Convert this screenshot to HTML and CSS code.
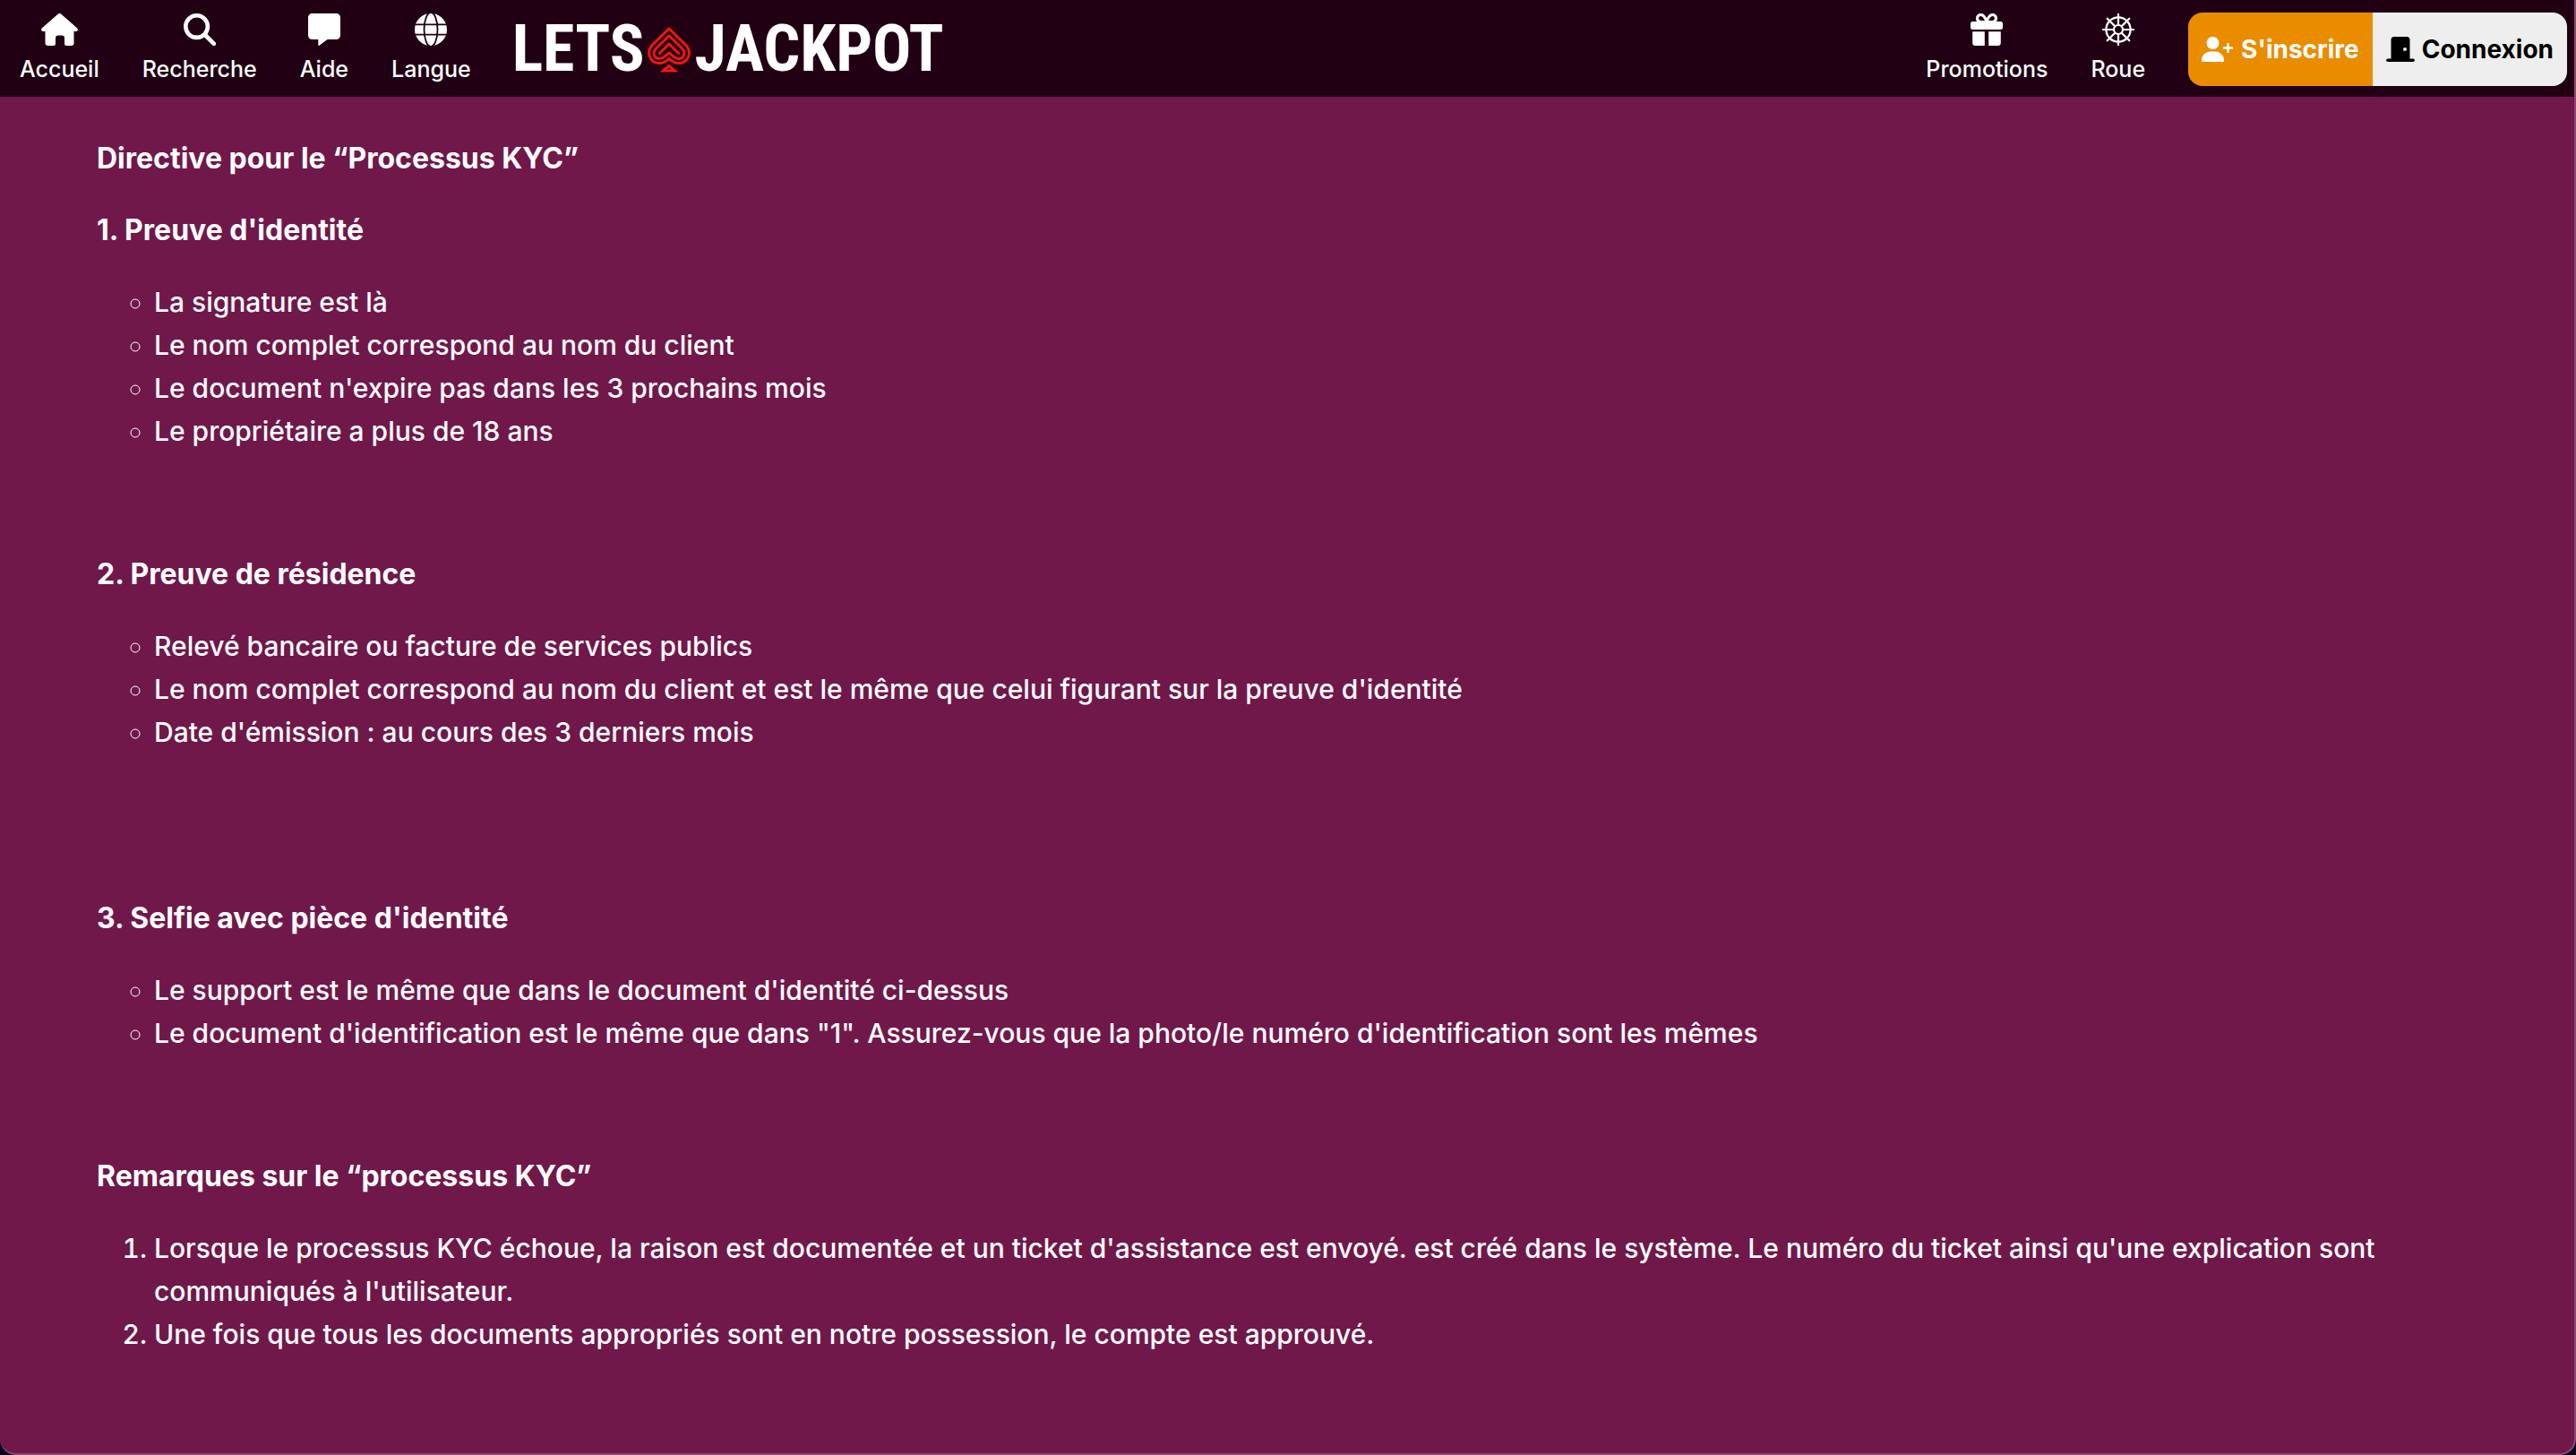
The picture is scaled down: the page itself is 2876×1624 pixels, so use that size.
FILE: index.html
```html
<!DOCTYPE html>
<html lang="fr">
<head>
<meta charset="utf-8">
<meta name="viewport" content="width=device-width, initial-scale=1">
<title>Lets Jackpot – Processus KYC</title>
<link rel="stylesheet" href="styles.css">
</head>
<body>
<div class="page">
  <header class="topbar">
    <nav class="menu" aria-label="Navigation principale">
      <a class="menu-link" href="#accueil">
        <svg class="icon icon-wide" viewBox="0 0 41 36" aria-hidden="true"><path d="M18.700.8a2.500 2.500 0 0 1 3.600 0L40.300 16.600c1.200 1.200.5 3.500-1.400 3.500H36.500V33a3 3 0 0 1-3 3H28a2 2 0 0 1-2-2v-6.500a3 3 0 0 0-3-3h-4a3 3 0 0 0-3 3V34a2 2 0 0 1-2 2H7.500a3 3 0 0 1-3-3V20.100H2.100C.2 20.100-.5 17.800.7 16.600z"/></svg>
        <span>Accueil</span>
      </a>
      <a class="menu-link" href="#recherche">
        <svg class="icon" viewBox="0 0 36 36" aria-hidden="true"><circle class="line thick" cx="14.600" cy="14.600" r="12.300"/><path class="line thick round" d="M23.500 23.500 33.800 33.800"/></svg>
        <span>Recherche</span>
      </a>
      <a class="menu-link" href="#aide">
        <svg class="icon" viewBox="0 0 36 36" aria-hidden="true"><path d="M4.500 0h27A4.500 4.500 0 0 1 36 4.500v20a4.500 4.500 0 0 1-4.500 4.500H21.500L12.500 35.800c-.6.4-1.200.1-1.200-.6V29H4.500A4.500 4.500 0 0 1 0 24.500v-20A4.500 4.500 0 0 1 4.500 0z"/></svg>
        <span>Aide</span>
      </a>
      <a class="menu-link" href="#langue">
        <svg class="icon" viewBox="0 0 36 36" aria-hidden="true"><circle cx="18" cy="18" r="18"/><g class="line cut"><path d="M0 12.400h36M0 23.600h36"/><ellipse cx="18" cy="18" rx="7.500" ry="19"/></g></svg>
        <span>Langue</span>
      </a>
    </nav>

    <a class="logo" href="#top" aria-label="Lets Jackpot">
      <span>LETS</span>
      <svg class="spade" viewBox="0 0 48 52" aria-hidden="true">
        <path d="M24 3 5.500 21C-2.500 29.500 3 41.500 13 41.500c4.500 0 8-1.800 11-5 3 3.200 6.500 5 11 5 10 0 15.500-12 7.500-20.500z"/>
        <path d="M24 11 9.500 25c-5 5.500-1.500 11.500 4 11.500 3.500 0 6-2.500 10.500-6.500 4.500 4 7 6.500 10.500 6.500 5.500 0 9-6 4-11.500z"/>
        <path d="m12.500 31.500L24 20l11.500 11.500"/>
        <path d="M24 44.500 17.500 50h13z"/>
      </svg>
      <span>JACKPOT</span>
    </a>

    <nav class="menu menu-extra" aria-label="Offres">
      <a class="menu-link" href="#promotions">
        <svg class="icon" viewBox="0 0 36 36" aria-hidden="true"><path class="line medium" d="M17.500 9.500H11.500A4 4 0 0 1 11.500 1.500C15 1.500 16.500 5 18 9c1.500-4 3-7.500 6.500-7.500a4 4 0 0 1 0 8H18"/><path d="M2.500 9h31A2.500 2.500 0 0 1 36 11.500V15.500A2.500 2.500 0 0 1 33.500 18H2.500A2.500 2.500 0 0 1 0 15.500V11.500A2.500 2.500 0 0 1 2.500 9zM2.200 20.200H15.800V36H5.500a3.300 3.300 0 0 1-3.300-3.300zM20.200 20.200H33.800V32.700A3.300 3.300 0 0 1 30.500 36H20.200z"/></svg>
        <span>Promotions</span>
      </a>
      <a class="menu-link" href="#roue">
        <svg class="icon" viewBox="0 0 36 36" aria-hidden="true"><g class="line thin round"><circle cx="18" cy="18" r="13.600"/><circle cx="18" cy="18" r="5"/><path d="M18 1v12M18 23v12M1 18h12M23 18h12M5.700 5.700l8.700 8.700M21.600 21.600l8.700 8.700M30.300 5.700l-8.700 8.700M14.400 21.600l-8.700 8.700"/></g></svg>
        <span>Roue</span>
      </a>
    </nav>

    <div class="account">
      <button class="account-btn signup" type="button">
        <svg class="btn-icon-wide" viewBox="0 0 36 28" aria-hidden="true"><circle cx="12.500" cy="7" r="7"/><path d="M0 26.400C0 21 4.400 16.600 9.800 16.600h5.400c5.400 0 9.800 4.400 9.800 9.800 0 .9-.7 1.600-1.600 1.600H1.600C.7 28 0 27.300 0 26.400z"/><path class="line plus" d="M29.500 7v11M24 12.500h11"/></svg>
        <span>S'inscrire</span>
      </button>
      <button class="account-btn login" type="button">
        <svg class="btn-icon" viewBox="0 0 32 28" aria-hidden="true"><path fill-rule="evenodd" d="M5.500 3.500A3.500 3.500 0 0 1 9 0H23a3.500 3.500 0 0 1 3.500 3.500V24.500h3.700a1.750 1.750 0 0 1 0 3.500H1.800a1.750 1.750 0 0 1 0-3.500H5.500zM21 12a2 2 0 1 0 0 4 2 2 0 0 0 0-4z"/></svg>
        <span>Connexion</span>
      </button>
    </div>
  </header>

  <main class="content" id="top">
    <section class="intro"><h1>Directive pour le “Processus KYC”</h1></section>
    <section>
      <h2>1. Preuve d'identité</h2>
      <ul>
        <li>La signature est là</li>
        <li>Le nom complet correspond au nom du client</li>
        <li>Le document n'expire pas dans les 3 prochains mois</li>
        <li>Le propriétaire a plus de 18 ans</li>
      </ul>
    </section>
    <section class="spaced">
      <h2>2. Preuve de résidence</h2>
      <ul>
        <li>Relevé bancaire ou facture de services publics</li>
        <li>Le nom complet correspond au nom du client et est le même que celui figurant sur la preuve d'identité</li>
        <li>Date d'émission : au cours des 3 derniers mois</li>
      </ul>
    </section>
    <section>
      <h2>3. Selfie avec pièce d'identité</h2>
      <ul>
        <li>Le support est le même que dans le document d'identité ci-dessus</li>
        <li>Le document d'identification est le même que dans "1". Assurez-vous que la photo/le numéro d'identification sont les mêmes</li>
      </ul>
    </section>
    <section>
      <h2>Remarques sur le “processus KYC”</h2>
      <ol>
        <li>Lorsque le processus KYC échoue, la raison est documentée et un ticket d'assistance est envoyé. est créé dans le système. Le numéro du ticket ainsi qu'une explication sont communiqués à l'utilisateur.</li>
        <li>Une fois que tous les documents appropriés sont en notre possession, le compte est approuvé.</li>
      </ol>
    </section>
  </main>
</div>
</body>
</html>
```
FILE: styles.css
```css
* { box-sizing: border-box; }

body {
  margin: 0;
  background: #0a0020;
  color: #fff;
  font-family: Inter, "Liberation Sans", sans-serif;
  font-size: 30px;
  font-weight: 500;
  line-height: 48px;
}

.page {
  min-height: 100vh;
  overflow: hidden;
  background: #70184a;
  border: solid #8e4670;
  border-width: 0 2px 2px 0;
  border-radius: 0 0 18px 18px;
}

/* Top bar */
.topbar {
  display: flex;
  align-items: center;
  height: 108px;
  padding: 2px 8px 0 22px;
  background: #210013;
}

.menu { display: flex; gap: 48px; }
.menu-extra { margin-left: auto; }

.menu-link {
  display: flex;
  flex-direction: column;
  align-items: center;
  gap: 8px;
  color: #fff;
  font-size: 25px;
  line-height: 36px;
  text-decoration: none;
}

.icon { width: 36px; height: 36px; fill: currentColor; }
.icon-wide { width: 41px; }

.line { fill: none; stroke: currentColor; }
.thick { stroke-width: 4.6; }
.medium { stroke-width: 3.2; }
.thin { stroke-width: 2.2; }
.plus { stroke-width: 2.4; }
.round { stroke-linecap: round; }
.cut { stroke: #210013; stroke-width: 1.8; }

.logo {
  display: flex;
  align-items: center;
  gap: 4px;
  margin-left: 46px;
  color: #fff;
  font-family: "Roboto Condensed", "Liberation Sans", sans-serif;
  font-size: 72px;
  font-weight: 700;
  line-height: 104px;
  text-decoration: none;
}

.spade {
  width: 48px;
  height: 52px;
  fill: none;
  stroke: #f01414;
  stroke-width: 3;
}

.account {
  display: flex;
  height: 82px;
  margin-left: 48px;
  overflow: hidden;
  border-radius: 16px;
}

.account-btn {
  display: flex;
  align-items: center;
  gap: 8px;
  padding: 0 15px;
  border: 0;
  font: inherit;
  font-size: 28px;
  font-weight: 700;
  cursor: pointer;
}

.account-btn svg { height: 28px; fill: currentColor; }
.account-btn .line { fill: none; }
.btn-icon-wide { width: 36px; }
.btn-icon { width: 32px; }
.signup { background: #ea8c00; color: #fff; }
.login { background: #eee; color: #000; }

/* Article */
.content { padding: 45px 108px; }

section { margin-bottom: 112px; }
section:last-child { margin-bottom: 0; }
.intro { margin-bottom: 32px; }
.spaced { margin-bottom: 160px; }

h1, h2 {
  margin: 0 0 32px;
  font-size: 32px;
  font-weight: 700;
}

ul, ol { margin: 0; padding-left: 64px; }
ul { list-style: circle; }
```
